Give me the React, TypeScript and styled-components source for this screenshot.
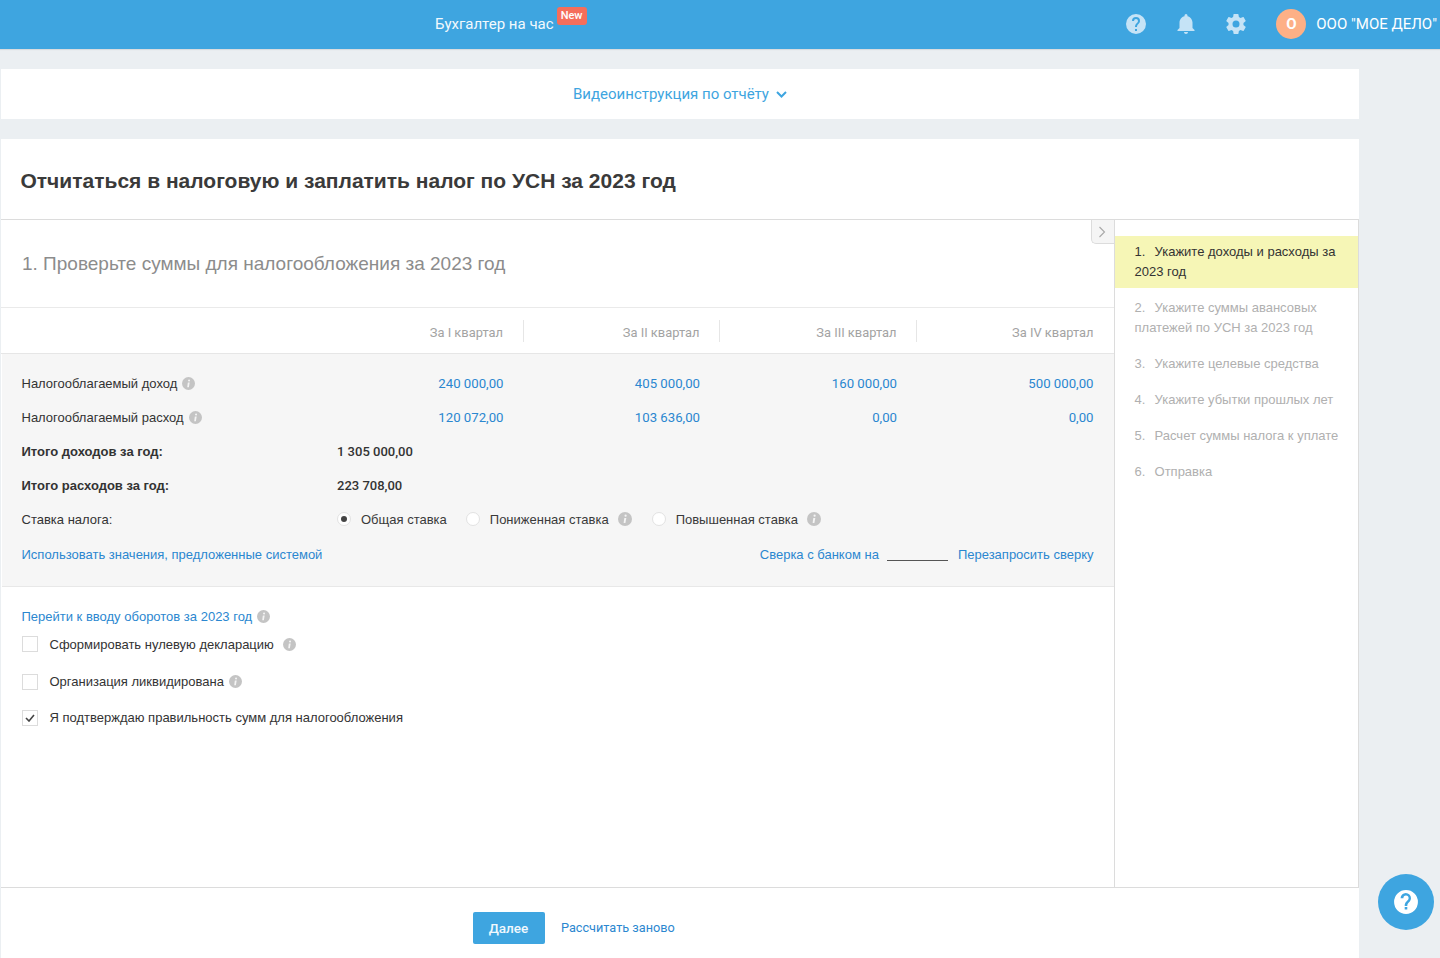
import React from "react";
import styled, { createGlobalStyle } from "styled-components";

const Global = createGlobalStyle`
  html, body { margin: 0; padding: 0; background: #ebeff2; height: 958px; overflow: hidden; }
  body { font-family: "Liberation Sans", Arial, sans-serif; color: #333; }
  * { box-sizing: border-box; }
`;
const Page = styled.div`width: 1440px; height: 958px; overflow: hidden; position: relative;`;
const Header = styled.header`
  height: 49px; background: #3ea5e0; display: flex; align-items: center; padding-left: 435px; color: #fff;
  font-family: Roboto, sans-serif; box-shadow: 0 1px 1px rgba(0,0,0,.08);
`;
const HeaderLink = styled.span`font-size: 15px; color: #f2f9fd; margin-top: -1px;`;
const NewBadge = styled.span`
  width: 30px; height: 18px; margin: -18px 0 0 3px; border-radius: 3px; background: #f56e5b; color: #fff;
  font-size: 11px; font-weight: 500; display: flex; align-items: center; justify-content: center; padding-bottom: 1px;
`;
const HeaderRight = styled.div`margin-left: auto; display: flex; align-items: center; height: 49px; padding-bottom: 1px; white-space: nowrap;`;
const HeadIcon = styled.svg`width: 24px; height: 24px; fill: #c5e3f6; display: block; margin-right: 26px; &:last-of-type { margin-right: 28px; }`;
const Avatar = styled.span`
  width: 30px; height: 30px; border-radius: 50%; background: #fdb086; color: #fff; font-size: 15px; font-weight: 700;
  display: flex; align-items: center; justify-content: center;
`;
const Org = styled.span`font-size: 15px; color: #fff; margin-left: 10px; margin-right: 3px;`;
const Content = styled.main`width: 1358px; margin-left: 1px; padding-top: 20px;`;
const VideoBar = styled.div`
  height: 50px; background: #fff; display: flex; align-items: center; justify-content: center; gap: 7px;
  color: #3ea5e0; font-family: Roboto, sans-serif; font-size: 15px;
`;
const Card = styled.section`margin-top: 20px; background: #fff; height: 819px; display: flex; flex-direction: column;`;
const TitleRow = styled.div`height: 81px; padding: 29px 20px 0 19.5px; border-bottom: 1px solid #dcdcdc;`;
const Title = styled.h1`margin: 0; font-size: 21px; line-height: 26px; font-weight: 700; color: #3a3a3a;`;
const Body = styled.div`display: flex; height: 667px; position: relative;`;
const Main = styled.div`width: 1114px; border-right: 1px solid #dcdcdc;`;
const StepHeading = styled.div`
  height: 88px; border-bottom: 1px solid #eaeaea; padding: 31px 21px 0; font-size: 19px; line-height: 26px; color: #8c8c8c;
`;
const QuarterRow = styled.div`
  display: grid; grid-template-columns: 326px 196.5px 196.5px 197px 177px; height: 46px; align-items: center;
  border-bottom: 1px solid #e6e6e6; font-size: 12.9px; color: #a3a3a3; font-family: Roboto, sans-serif;
`;
const QuarterCell = styled.div<{ $last?: boolean }>`
  height: 22px; line-height: 26px; text-align: right; padding-right: ${p => (p.$last ? "0.5px" : "19.5px")};
  ${p => (p.$last ? "" : "border-right: 1px solid #e6e6e6;")}
`;
const GrayPanel = styled.div`
  height: 233px; margin-left: 1px; background: #f6f6f6; border-bottom: 1px solid #e8e8e8; padding: 12px 20.5px 0 19.5px;
`;
const DataRow = styled.div`
  display: grid; grid-template-columns: 305.5px 196.5px 196.5px 197px 176.5px; height: 34px; align-items: center; font-size: 13px; color: #333;
`;
const Label = styled.div<{ $bold?: boolean }>`
  display: flex; align-items: center; gap: 5px; font-weight: ${p => (p.$bold ? 700 : 400)}; font-size: 13px; white-space: nowrap;
`;
const Money = styled.div`text-align: right; padding-right: 20px; color: #2b87d0; font-family: Roboto, sans-serif; font-size: 13.2px;`;
const MoneyLast = styled(Money)`padding-right: 0;`;
const TotalValue = styled.div`grid-column: 2 / span 2; padding-left: 10px; font-family: Roboto, sans-serif; font-weight: 500; font-size: 13px; color: #333;`;
const RateOptions = styled.div`grid-column: 2 / span 4; display: flex; align-items: center; padding-left: 10px;`;
const Radio = styled.span<{ $on?: boolean }>`
  width: 14px; height: 14px; border-radius: 50%; background: #fff; border: 1px solid #e2e2e2; position: relative; flex: none;
  margin-right: 10px;
  ${p => (p.$on ? `&::after { content: ""; position: absolute; left: 3px; top: 3px; width: 6px; height: 6px; border-radius: 50%; background: #444; }` : "")}
`;
const RateText = styled.span`font-size: 13px; white-space: nowrap; color: #3a3a3a; margin-right: 9px;`;
const RateGroup = styled.span<{ $gap: number }>`display: inline-flex; align-items: center; margin-right: ${p => p.$gap}px;`;
const LinksRow = styled.div`display: flex; align-items: center; justify-content: space-between; height: 36px;`;
const BlueLink = styled.a`color: #2b87d0; font-size: 13px; white-space: nowrap;`;
const SverkaGroup = styled.div`display: flex; align-items: center;`;
const BlankLine = styled.span`display: inline-block; width: 61px; margin: 0 10px 0 8px; border-bottom: 1px solid #555; height: 14px;`;
const Options = styled.div`padding: 20px 21px 0 20.5px;`;
const JumpRow = styled.div`display: flex; align-items: center; gap: 5px; height: 18px;`;
const CheckRow = styled.div<{ $h: number }>`display: flex; align-items: center; height: ${p => p.$h}px; font-size: 13px; color: #333;`;
const Box = styled.span`
  width: 16px; height: 16px; border: 1px solid #dcdcdc; background: #fff; margin-right: 12px; display: flex; align-items: center; justify-content: center; flex: none;
`;
const CheckText = styled.span<{ $mr: number; $up?: boolean }>`
  margin-right: ${p => p.$mr}px; white-space: nowrap; ${p => (p.$up ? "margin-top: -2px;" : "")}
`;
const InfoDot = styled.svg<{ $size?: number }>`width: ${p => p.$size ?? 13}px; height: ${p => p.$size ?? 13}px; display: block; flex: none;`;
const Side = styled.aside`width: 244px; border-right: 1px solid #dcdcdc; padding-top: 16px; position: relative;`;
const SideItem = styled.div<{ $active?: boolean }>`
  padding: ${p => (p.$active ? "6px 15px 6px 19.5px" : "8px 15px 8px 19.5px")}; margin-bottom: ${p => (p.$active ? "2px" : "0")};
  line-height: 20px; font-size: 13px;
  color: ${p => (p.$active ? "#333" : "#b0b0b0")};
  background: ${p => (p.$active ? "#f6f6b6" : "transparent")};
`;
const Num = styled.span`margin-right: 9.2px;`;
const Toggle = styled.button`
  position: absolute; left: 1090px; top: 0; width: 23px; height: 24px; padding: 0 2px 0 0; background: #f5f5f5; border: 1px solid #dcdcdc;
  border-right: 0; border-top: 0; border-radius: 0 0 0 5px; display: flex; align-items: center; justify-content: center;
`;
const Footer = styled.footer`
  height: 71px; border-top: 1px solid #dcdcdc; display: flex; align-items: flex-start; padding: 24px 0 0 472px; gap: 16px; font-family: Roboto, sans-serif;
`;
const NextBtn = styled.button`
  width: 72px; height: 32px; border: 0; border-radius: 2px; padding: 0 1px 0 0; background: #3ea5e0; color: #f0f8fd; font-family: Roboto, sans-serif; font-size: 13.5px; font-weight: 500;
`;
const Recalc = styled.a`color: #2b87d0; font-size: 12.7px; line-height: 32px;`;
const HelpFab = styled.button`
  position: absolute; left: 1378px; top: 874px; width: 56px; height: 56px; border: 0; border-radius: 50%; background: #3ea5e0; padding: 0;
  display: flex; align-items: center; justify-content: center;
`;

const Info = ({ size }: { size?: number }) => (
  <InfoDot $size={size} viewBox="0 0 14 14">
    <circle cx="7" cy="7" r="7" fill="#c4c4c4" />
    <circle cx="7.6" cy="3.7" r="1.1" fill="#f4f4f4" />
    <path d="M6.3 6h2l-.9 5H5.6z" fill="#f4f4f4" />
  </InfoDot>
);

const quarters = [
  ["240 000,00", "405 000,00", "160 000,00", "500 000,00"],
  ["120 072,00", "103 636,00", "0,00", "0,00"],
];

export default function App() {
  return (
    <Page>
      <Global />
      <Header>
        <HeaderLink>Бухгалтер на час</HeaderLink>
        <NewBadge>New</NewBadge>
        <HeaderRight>
          <HeadIcon viewBox="0 0 24 24"><path d="M12 2a10 10 0 1 0 0 20 10 10 0 0 0 0-20zm1 17h-2v-2h2v2zm2.07-7.75-.9.92C13.45 12.9 13 13.5 13 15h-2v-.5c0-1.1.45-2.1 1.17-2.83l1.24-1.26c.37-.36.59-.86.59-1.41a2 2 0 1 0-4 0H8a4 4 0 1 1 8 0c0 .88-.36 1.68-.93 2.25z" /></HeadIcon>
          <HeadIcon viewBox="0 0 24 24"><path d="M12 22c1.1 0 2-.9 2-2h-4c0 1.1.9 2 2 2zm6.5-6v-5.5c0-3.07-2.13-5.64-5-6.32V3.5a1.5 1.5 0 0 0-3 0v.68c-2.87.68-5 3.25-5 6.32V16l-2 2v1h17v-1l-2-2z" /></HeadIcon>
          <HeadIcon viewBox="0 0 24 24"><path d="M19.43 12.98c.04-.32.07-.64.07-.98s-.03-.66-.07-.98l2.11-1.65c.19-.15.24-.42.12-.64l-2-3.46c-.12-.22-.39-.3-.61-.22l-2.49 1c-.52-.4-1.08-.73-1.69-.98l-.38-2.65A.49.49 0 0 0 14 2h-4c-.25 0-.46.18-.49.42l-.38 2.65c-.61.25-1.17.59-1.69.98l-2.49-1a.5.5 0 0 0-.61.22l-2 3.46c-.13.22-.07.49.12.64l2.11 1.65c-.04.32-.07.65-.07.98s.03.66.07.98l-2.11 1.65c-.19.15-.24.42-.12.64l2 3.46c.12.22.39.3.61.22l2.49-1c.52.4 1.08.73 1.69.98l.38 2.65c.03.24.24.42.49.42h4c.25 0 .46-.18.49-.42l.38-2.65c.61-.25 1.17-.59 1.69-.98l2.49 1c.23.09.49 0 .61-.22l2-3.46c.12-.22.07-.49-.12-.64l-2.11-1.65zM12 15.5a3.5 3.5 0 1 1 0-7 3.5 3.5 0 0 1 0 7z" /></HeadIcon>
          <Avatar>О</Avatar>
          <Org>ООО "МОЕ ДЕЛО"</Org>
        </HeaderRight>
      </Header>
      <Content>
        <VideoBar>
          Видеоинструкция по отчёту
          <svg width="11" height="7" viewBox="0 0 11 7"><path d="M1 1l4.5 4.5L10 1" fill="none" stroke="#3ea5e0" strokeWidth="2" /></svg>
        </VideoBar>
        <Card>
          <TitleRow><Title>Отчитаться в налоговую и заплатить налог по УСН за 2023 год</Title></TitleRow>
          <Body>
            <Main>
              <StepHeading>1. Проверьте суммы для налогообложения за 2023 год</StepHeading>
              <QuarterRow>
                <span />
                <QuarterCell>За I квартал</QuarterCell>
                <QuarterCell>За II квартал</QuarterCell>
                <QuarterCell>За III квартал</QuarterCell>
                <QuarterCell $last>За IV квартал</QuarterCell>
              </QuarterRow>
              <GrayPanel>
                <DataRow>
                  <Label>Налогооблагаемый доход <Info /></Label>
                  <Money>{quarters[0][0]}</Money>
                  <Money>{quarters[0][1]}</Money>
                  <Money>{quarters[0][2]}</Money>
                  <MoneyLast>{quarters[0][3]}</MoneyLast>
                </DataRow>
                <DataRow>
                  <Label>Налогооблагаемый расход <Info /></Label>
                  <Money>{quarters[1][0]}</Money>
                  <Money>{quarters[1][1]}</Money>
                  <Money>{quarters[1][2]}</Money>
                  <MoneyLast>{quarters[1][3]}</MoneyLast>
                </DataRow>
                <DataRow>
                  <Label $bold>Итого доходов за год:</Label>
                  <TotalValue>1 305 000,00</TotalValue>
                </DataRow>
                <DataRow>
                  <Label $bold>Итого расходов за год:</Label>
                  <TotalValue>223 708,00</TotalValue>
                </DataRow>
                <DataRow>
                  <Label>Ставка налога:</Label>
                  <RateOptions>
                    <RateGroup $gap={10}><Radio $on /><RateText>Общая ставка</RateText></RateGroup>
                    <RateGroup $gap={20}><Radio /><RateText>Пониженная ставка</RateText><Info size={14} /></RateGroup>
                    <RateGroup $gap={0}><Radio /><RateText>Повышенная ставка</RateText><Info size={14} /></RateGroup>
                  </RateOptions>
                </DataRow>
                <LinksRow>
                  <BlueLink>Использовать значения, предложенные системой</BlueLink>
                  <SverkaGroup>
                    <BlueLink>Сверка с банком на</BlueLink>
                    <BlankLine />
                    <BlueLink>Перезапросить сверку</BlueLink>
                  </SverkaGroup>
                </LinksRow>
              </GrayPanel>
              <Options>
                <JumpRow>
                  <BlueLink>Перейти к вводу оборотов за 2023 год</BlueLink>
                  <Info />
                </JumpRow>
                <CheckRow $h={38}><Box /><CheckText $mr={9}>Сформировать нулевую декларацию</CheckText><Info /></CheckRow>
                <CheckRow $h={37}><Box /><CheckText $mr={5}>Организация ликвидирована</CheckText><Info /></CheckRow>
                <CheckRow $h={36}>
                  <Box>
                    <svg width="10" height="8" viewBox="0 0 10 8"><path d="M1 4l3 3 5-6" fill="none" stroke="#444" strokeWidth="1.6" /></svg>
                  </Box>
                  <CheckText $mr={0} $up>Я подтверждаю правильность сумм для налогообложения</CheckText>
                </CheckRow>
              </Options>
            </Main>
            <Toggle>
              <svg width="8" height="12" viewBox="0 0 8 12"><path d="M1.5 1l5 5-5 5" fill="none" stroke="#a8a8a8" strokeWidth="1.1" /></svg>
            </Toggle>
            <Side>
              <SideItem $active><Num>1.</Num>Укажите доходы и расходы за 2023 год</SideItem>
              <SideItem><Num>2.</Num>Укажите суммы авансовых платежей по УСН за 2023 год</SideItem>
              <SideItem><Num>3.</Num>Укажите целевые средства</SideItem>
              <SideItem><Num>4.</Num>Укажите убытки прошлых лет</SideItem>
              <SideItem><Num>5.</Num>Расчет суммы налога к уплате</SideItem>
              <SideItem><Num>6.</Num>Отправка</SideItem>
            </Side>
          </Body>
          <Footer>
            <NextBtn>Далее</NextBtn>
            <Recalc>Рассчитать заново</Recalc>
          </Footer>
        </Card>
      </Content>
      <HelpFab>
        <svg width="26" height="26" viewBox="0 0 24 24"><path fill="#fff" d="M12 1a11 11 0 1 0 0 22 11 11 0 0 0 0-22zm1.2 18h-2.4v-2.4h2.4V19zm2.5-7.6-1.1 1.1c-.9.9-1.4 1.5-1.4 3.2h-2.4v-.6c0-1.3.5-2.5 1.4-3.4l1.5-1.5c.5-.4.7-1 .7-1.7a2.4 2.4 0 1 0-4.8 0H7a4.8 4.8 0 1 1 9.6 0c0 1-.4 2-.9 2.9z" /></svg>
      </HelpFab>
    </Page>
  );
}
